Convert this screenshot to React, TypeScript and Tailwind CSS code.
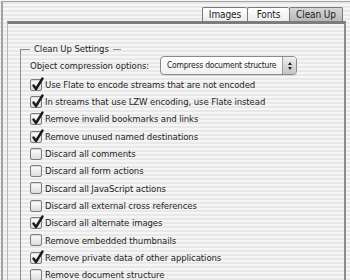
import React from "react";

const items: [string, boolean][] = [
  ["Use Flate to encode streams that are not encoded", true],
  ["In streams that use LZW encoding, use Flate instead", true],
  ["Remove invalid bookmarks and links", true],
  ["Remove unused named destinations", true],
  ["Discard all comments", false],
  ["Discard all form actions", false],
  ["Discard all JavaScript actions", false],
  ["Discard all external cross references", false],
  ["Discard all alternate images", true],
  ["Remove embedded thumbnails", false],
  ["Remove private data of other applications", true],
  ["Remove document structure", false],
];

function Check({ checked }: { checked: boolean }) {
  return (
    <div className="relative w-[12px] h-[12px] shrink-0 rounded-[2px] border border-[#7d7d7d] bg-[linear-gradient(180deg,#ffffff,#dcdcdc)] shadow-[inset_0_1px_1px_rgba(0,0,0,0.15)]">
      {checked && (
        <svg
          className="absolute left-[0px] top-[-4px]"
          width="14"
          height="16"
          viewBox="0 0 14 16"
        >
          <path
            d="M2.5 9.5 L5 13 L11.5 2.5"
            fill="none"
            stroke="#1a1a1a"
            strokeWidth="2.4"
            strokeLinecap="round"
            strokeLinejoin="round"
          />
        </svg>
      )}
    </div>
  );
}

function Tab({ label, w, selected }: { label: string; w: string; selected?: boolean }) {
  return (
    <div
      className={
        "h-[14px] flex items-center justify-center border-l border-t border-[#7a7a7a] rounded-t-[2px] " +
        w +
        (selected
          ? " bg-[linear-gradient(180deg,#d6d6d6,#b9b9b9)] border-r"
          : " bg-[linear-gradient(180deg,#ffffff,#ececec)]")
      }
    >
      <span className="text-[#1c1c1c] text-[10px]">{label}</span>
    </div>
  );
}

export default function App() {
  return (
    <div
      className="w-[350px] h-[280px] overflow-hidden bg-[image:repeating-linear-gradient(180deg,#f6f6f6_0px,#f6f6f6_2px,#e8e8e8_2px,#e8e8e8_4px)] text-[9.5px] leading-none tracking-[-0.1px] text-[#1e1e1e]"
      style={{ fontFamily: '"DejaVu Sans Condensed", "DejaVu Sans", sans-serif' }}
    >
      <div className="ml-[1px] mt-[1px] h-full border-l-2 border-t border-[#a3a3a3]">
        <div className="flex justify-end pr-[7px] pt-[5px]">
          <Tab label="Images" w="w-[45px]" />
          <Tab label="Fonts" w="w-[42px]" />
          <Tab label="Clean Up" w="w-[54px]" selected />
        </div>
        <div className="ml-[4px] mr-[4px] h-full border-t-[3px] border-t-[#7c7c7c] border-l border-l-[#b5b5b5] border-r-2 border-r-[#8c8c8c] pt-[19px]">
          <div className="ml-[12px]">
            <div className="flex items-center h-[12px]">
              <div className="w-[10px] h-px bg-[#8a8a8a]" />
              <span className="px-[4px]">Clean Up Settings</span>
              <div className="w-[8px] h-px bg-[#8a8a8a]" />
            </div>
            <div className="-mt-[6px] border-l border-[#8a8a8a] pt-[7px] pl-[9px]">
              <div className="flex items-center h-[19px]">
                <span className="w-[130px] shrink-0 whitespace-nowrap">Object compression options:</span>
                <div className="w-[137px] h-[19px] flex rounded-[4px] border border-[#8a8a8a] bg-[linear-gradient(180deg,#ffffff,#f0f0f0)] overflow-hidden shadow-[0_1px_0_rgba(0,0,0,0.08)]">
                  <div className="flex-1 min-w-0 flex items-center pl-[6px] whitespace-nowrap text-[8.5px] tracking-[-0.25px]">Compress document structure</div>
                  <div className="w-[14px] shrink-0 border-l border-[#9a9a9a] bg-[linear-gradient(180deg,#efefef,#c4c4c4)] flex flex-col items-center justify-center gap-[2px]">
                    <div className="w-0 h-0 border-l-[2.5px] border-r-[2.5px] border-b-[3px] border-l-transparent border-r-transparent border-b-[#222]" />
                    <div className="w-0 h-0 border-l-[2.5px] border-r-[2.5px] border-t-[3px] border-l-transparent border-r-transparent border-t-[#222]" />
                  </div>
                </div>
              </div>
              <div className="flex flex-col pt-[1px]">
                {items.map(([label, checked]) => (
                  <div key={label} className="flex items-center h-[17.3px] gap-[3px] whitespace-nowrap">
                    <Check checked={checked} />
                    <span>{label}</span>
                  </div>
                ))}
              </div>
            </div>
          </div>
        </div>
      </div>
    </div>
  );
}
